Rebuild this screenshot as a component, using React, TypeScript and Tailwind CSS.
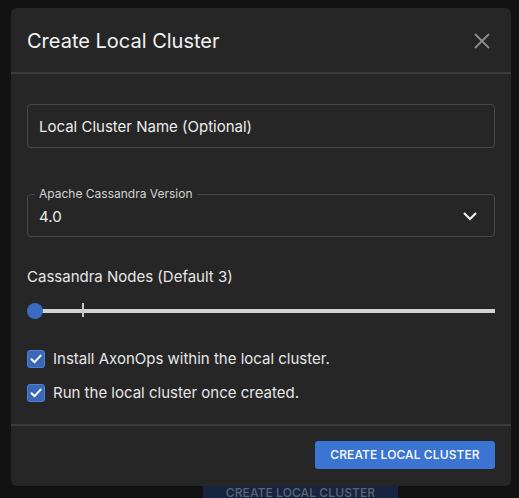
import React, { useState } from 'react';

const font = { fontFamily: 'Inter, "Noto Sans", sans-serif' };

const CheckBox: React.FC<{ checked: boolean; onChange: () => void; label: string }> = ({ checked, onChange, label }) => {
  return (
    <label className="flex items-center gap-[8px] cursor-pointer" onClick={onChange}>
      <span className="flex h-[18px] w-[18px] items-center justify-center rounded-[3px] border border-[#4f7fd1] bg-[#3a67b7]">
        {checked && (
          <svg width="12" height="10" viewBox="0 0 12 10">
            <path d="M1.5 5.2 L4.6 8.2 L10.6 1.6" fill="none" stroke="#ffffff" strokeWidth="2" strokeLinecap="round" strokeLinejoin="round" />
          </svg>
        )}
      </span>
      <span className="text-[15px] text-[#e6e6e6]">{label}</span>
    </label>
  );
};

const App: React.FC = () => {
  const [name, setName] = useState('');
  const [axon, setAxon] = useState(true);
  const [run, setRun] = useState(true);

  return (
    <div className="h-[498px] w-full overflow-hidden bg-[#121212]" style={font}>
      <div className="relative z-10 ml-[11px] mt-[8px] flex h-[478px] w-[500px] flex-col rounded-[6px] bg-[#262626]">
        {/* header */}
        <div className="flex h-[64px] items-center justify-between px-[16px] pt-[1px]">
          <h2 className="text-[20px] font-normal text-[#f2f2f2]">Create Local Cluster</h2>
          <button className="mr-[3px] flex h-[20px] w-[20px] items-center justify-center">
            <svg width="16" height="16" viewBox="0 0 16 16">
              <path d="M1 1 L15 15 M15 1 L1 15" stroke="#8c8c8c" strokeWidth="1.8" />
            </svg>
          </button>
        </div>
        <div className="h-[2px] bg-[#3b3b3b]" />

        {/* body */}
        <div className="flex flex-1 flex-col px-[16px] pt-[30px]">
          <input
            type="text"
            value={name}
            onChange={(e) => setName(e.target.value)}
            placeholder="Local Cluster Name (Optional)"
            className="h-[44px] w-full rounded-[4px] border border-[#484848] bg-transparent px-[11px] text-[15px] text-[#ececec] outline-none placeholder:text-[#ececec]"
          />

          <div className="relative mt-[46px] flex h-[43px] items-center justify-between rounded-[4px] border border-[#484848] px-[11px]">
            <span className="absolute left-[7px] top-[-9px] bg-[#262626] px-[4px] text-[12px] leading-[16px] text-[#d4d4d4]">
              Apache Cassandra Version
            </span>
            <span className="mt-[3px] text-[15px] text-[#ececec]">4.0</span>
            <svg width="16" height="10" viewBox="0 0 16 10" className="mr-[5px] mt-[1px]">
              <path d="M2 2 L8 8 L14 2" fill="none" stroke="#f0f0f0" strokeWidth="2.2" />
            </svg>
          </div>

          <div className="mt-[29px] text-[15px] text-[#e6e6e6]">Cassandra Nodes (Default 3)</div>

          <div className="relative mt-[12px] flex h-[20px] items-center">
            <div className="ml-[8px] h-[4px] flex-1 bg-[#d2d2d2]" />
            <span className="absolute left-[55px] top-[2px] h-[14px] w-[2px] bg-[#c8c8c8]" />
            <span className="absolute left-0 top-[2px] h-[16px] w-[16px] rounded-full bg-[#3a6bc4]" />
          </div>

          <div className="mt-[27px] flex flex-col gap-[12px]">
            <CheckBox checked={axon} onChange={() => setAxon(!axon)} label="Install AxonOps within the local cluster." />
            <CheckBox checked={run} onChange={() => setRun(!run)} label="Run the local cluster once created." />
          </div>
        </div>

        <div className="h-[2px] bg-[#3b3b3b]" />
        {/* footer */}
        <div className="flex justify-end px-[16px] pb-[17px] pt-[15px]">
          <button className="h-[28px] w-[180px] rounded-[3px] bg-[#3b74d1] text-[12px] font-medium tracking-[0.1px] text-white">
            CREATE LOCAL CLUSTER
          </button>
        </div>
      </div>

      <div className="-mt-[7px] ml-[203px] flex h-[28px] w-[195px] items-center justify-center bg-[#172440] text-[12px] font-medium tracking-[0.1px] text-[#5c6577]">
        CREATE LOCAL CLUSTER
      </div>
    </div>
  );
};

export default App;
